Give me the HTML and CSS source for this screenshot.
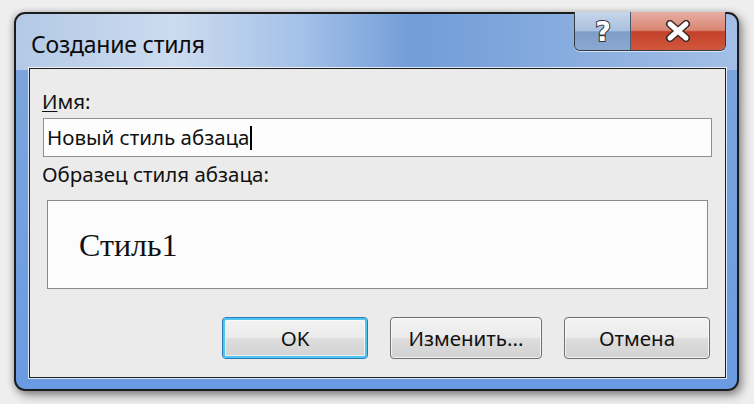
FILE: index.html
```html
<!DOCTYPE html>
<html lang="ru">
<head>
<meta charset="utf-8">
<title>Создание стиля</title>
<link rel="stylesheet" href="styles.css">
</head>
<body>
<div class="window">
  <div class="titlebar">
    <div class="title">Создание стиля</div>
    <div class="caption-buttons">
      <div class="cap-btn help">
        <svg width="24" height="30" viewBox="0 0 24 30"><text x="12" y="25" text-anchor="middle" class="glyph">?</text></svg>
      </div>
      <div class="cap-btn close">
        <svg width="30" height="22" viewBox="0 0 30 22">
          <path d="M7 4 L23 18 M23 4 L7 18" class="x-outline"/>
          <path d="M7 4 L23 18 M23 4 L7 18" class="x-fill"/>
        </svg>
      </div>
    </div>
  </div>
  <div class="client">
    <div class="label"><u>И</u>мя:</div>
    <div class="input">Новый стиль абзаца<span class="caret"></span></div>
    <div class="label label-2">Образец стиля абзаца:</div>
    <div class="preview"><span class="sample">Стиль1</span></div>
    <div class="actions">
      <div class="btn default">OK</div>
      <div class="btn wide">Изменить...</div>
      <div class="btn">Отмена</div>
    </div>
  </div>
</div>
</body>
</html>
```
FILE: styles.css
```css
html, body {
  margin: 0;
  padding: 0;
}
body {
  width: 754px;
  height: 404px;
  background: #eeeeee;
  font-family: "Noto Sans", "Open Sans", sans-serif;
  color: #111;
  overflow: hidden;
}
.window {
  box-sizing: border-box;
  margin: 12px 0 0 14px;
  width: 725px;
  height: 379px;
  border: 2px solid #1c1c1c;
  border-radius: 11px;
  background:
    linear-gradient(to right, #b3c9e6 0%, #ccdbef 22%, #a3c0e7 40%, #729dd8 55%, #86abde 75%, #a3bfe6 100%) top / 100% 56px no-repeat,
    linear-gradient(to bottom, #7ea6db 0%, #6a9be2 100%);
  box-shadow: 3px 4px 10px rgba(0,0,0,0.45), -2px 0 6px rgba(0,0,0,0.15);
  display: flex;
  flex-direction: column;
  padding: 0 11px 11px 13px;
}
.titlebar {
  height: 54px;
  display: flex;
  align-items: flex-start;
  justify-content: space-between;
}
.title {
  margin: 15px 0 0 2px;
  font-size: 23px;
  line-height: 30px;
  color: #0b0b0b;
  letter-spacing: -0.2px;
}
.caption-buttons {
  display: flex;
  margin-top: -2px;
  height: 38px;
  border: 1px solid #333a44;
  border-top: none;
  border-radius: 0 0 6px 6px;
  overflow: hidden;
  box-shadow: 0 1px 0 rgba(255,255,255,0.6);
}
.cap-btn {
  height: 38px;
  display: flex;
  align-items: center;
  justify-content: center;
}
.cap-btn.help {
  width: 55px;
  background: linear-gradient(to bottom, #c7d6ea 0%, #a9bfdd 50%, #7f9dc6 52%, #8aa8d0 100%);
  border-right: 1px solid #4a5a70;
}
.cap-btn.close {
  width: 94px;
  background: linear-gradient(to bottom, #e6aea3 0%, #d98673 48%, #c4412a 52%, #d0573c 100%);
}
.glyph {
  font-family: "DejaVu Sans", sans-serif;
  font-weight: bold;
  font-size: 27px;
  fill: #ffffff;
  stroke: #2b3440;
  stroke-width: 2px;
  paint-order: stroke;
}
.x-outline {
  stroke: #3a2a28;
  stroke-width: 8px;
  stroke-linecap: round;
  fill: none;
}
.x-fill {
  stroke: #ffffff;
  stroke-width: 5px;
  stroke-linecap: round;
  fill: none;
}
.client {
  flex: 1;
  background: #ebebeb;
  border: 1px solid #1e1e1e;
  box-shadow: 0 0 0 1px rgba(255,255,255,0.75);
  display: flex;
  flex-direction: column;
  padding: 20px 13px 17px 12px;
}
.label {
  font-size: 20.5px;
  line-height: 24px;
  color: #111;
}
.label u {
  text-decoration-thickness: 1px;
  text-underline-offset: 2px;
}
.input {
  box-sizing: border-box;
  margin-top: 5px;
  height: 39px;
  margin-left: 1px;
  background: #fdfdfd;
  border: 1px solid #8f8f8f;
  font-size: 20.5px;
  line-height: 37px;
  padding-left: 3px;
  display: flex;
  align-items: center;
}
.caret {
  display: inline-block;
  width: 1.5px;
  height: 24px;
  background: #000;
  margin-left: 1px;
}
.label-2 {
  margin-top: 5px;
}
.preview {
  box-sizing: border-box;
  margin: 14px 4px 0 5px;
  height: 89px;
  background: #fcfcfd;
  border: 1px solid #8a8a8a;
  padding: 26px 0 0 31px;
}
.sample {
  font-family: "Liberation Serif", "Times New Roman", serif;
  font-size: 32px;
  line-height: 36px;
  color: #111;
}
.actions {
  margin-top: 28px;
  display: flex;
  justify-content: flex-end;
  gap: 22px;
  padding-right: 2px;
}
.btn {
  box-sizing: border-box;
  width: 146px;
  height: 42px;
  border: 1px solid #6f6f6f;
  border-radius: 4px;
  background: linear-gradient(to bottom, #f3f3f3 0%, #ebebeb 48%, #dddddd 52%, #d2d2d2 100%);
  box-shadow: inset 0 0 0 1px rgba(255,255,255,0.7);
  font-size: 20.5px;
  line-height: 40px;
  text-align: center;
  color: #111;
}
.btn.wide {
  width: 152px;
}
.btn.default {
  border: 1px solid #2a7ab8;
  box-shadow: inset 0 0 0 2px #4fc6f2, inset 0 0 0 3px rgba(255,255,255,0.6);
}
```
